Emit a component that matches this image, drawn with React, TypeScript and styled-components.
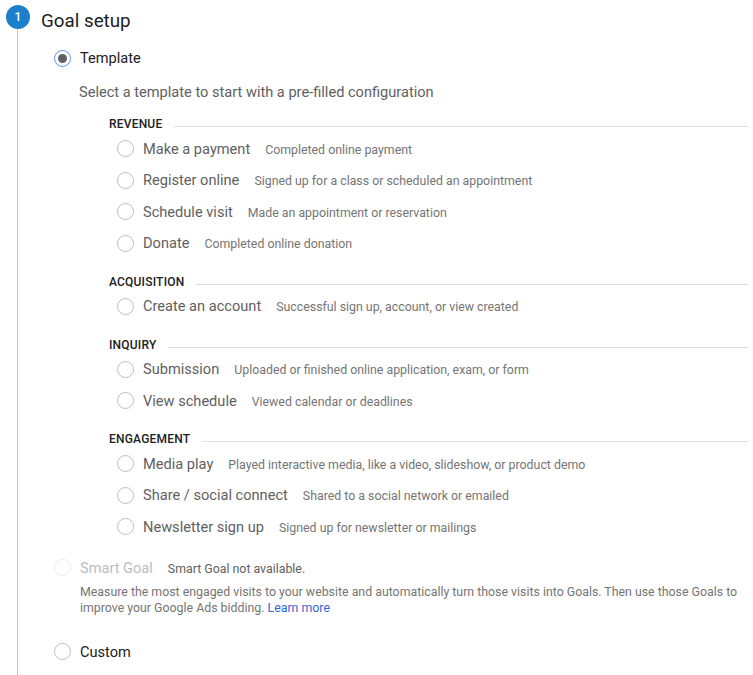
import { createGlobalStyle, styled } from "styled-components";

const GlobalStyle = createGlobalStyle`
  html, body {
    margin: 0;
    padding: 0;
    background: #fff;
  }
  body {
    font-family: Roboto, "Liberation Sans", Arial, sans-serif;
  }
`;

const groups = [
  {
    name: "Revenue",
    items: [
      ["Make a payment", "Completed online payment"],
      ["Register online", "Signed up for a class or scheduled an appointment"],
      ["Schedule visit", "Made an appointment or reservation"],
      ["Donate", "Completed online donation"],
    ],
  },
  {
    name: "Acquisition",
    items: [["Create an account", "Successful sign up, account, or view created"]],
  },
  {
    name: "Inquiry",
    items: [
      ["Submission", "Uploaded or finished online application, exam, or form"],
      ["View schedule", "Viewed calendar or deadlines"],
    ],
  },
  {
    name: "Engagement",
    items: [
      ["Media play", "Played interactive media, like a video, slideshow, or product demo"],
      ["Share / social connect", "Shared to a social network or emailed"],
      ["Newsletter sign up", "Signed up for newsletter or mailings"],
    ],
  },
];

const Page = styled.div`
  display: flex;
  width: 753px;
  height: 675px;
  overflow: hidden;
  box-sizing: border-box;
  padding: 5px 5px 0 6px;
`;

const Rail = styled.div`
  display: flex;
  flex-direction: column;
  align-items: center;
  width: 24px;
  flex: none;
`;

const StepBadge = styled.div`
  width: 24px;
  height: 24px;
  flex: none;
  border-radius: 50%;
  background: #1c7fcb;
  color: #fff;
  font-size: 12px;
  font-weight: 500;
  display: flex;
  align-items: center;
  justify-content: center;
`;

const RailLine = styled.div`
  width: 1px;
  flex: 1;
  margin-right: 1px;
  background: #c6c6c6;
`;

const Body = styled.div`
  flex: 1;
  min-width: 0;
  padding-left: 11px;
`;

const Title = styled.h2`
  margin: 0;
  height: 30px;
  line-height: 32px;
  font-size: 18.8px;
  font-weight: 400;
  color: #212121;
`;

const Options = styled.div`
  padding-left: 13px;
`;

const OptionRow = styled.label<{ $top: number }>`
  display: flex;
  align-items: center;
  height: 20px;
  margin-top: ${(p) => p.$top}px;
  gap: 9px;
`;

const Radio = styled.span<{ $state?: "checked" | "disabled" }>`
  width: 17px;
  height: 17px;
  flex: none;
  box-sizing: border-box;
  border-radius: 50%;
  background: #fff;
  display: flex;
  align-items: center;
  justify-content: center;
  border: 1px solid
    ${(p) =>
      p.$state === "checked" ? "#5b8fef" : p.$state === "disabled" ? "#ececec" : "#bdbdbd"};
  &::after {
    content: "";
    width: 9px;
    height: 9px;
    border-radius: 50%;
    background: ${(p) => (p.$state === "checked" ? "#616161" : "transparent")};
  }
`;

const OptionLabel = styled.span<{ $muted?: boolean }>`
  font-size: 14.6px;
  color: ${(p) => (p.$muted ? "#bdbdbd" : "#212121")};
`;

const Intro = styled.p`
  margin: 14px 0 0 25px;
  height: 20px;
  line-height: 20px;
  font-size: 14.6px;
  color: #616161;
`;

const Groups = styled.div`
  padding-left: 55px;
  margin-top: 13.2px;
`;

const Group = styled.section`
  margin-bottom: 13.5px;
`;

const GroupHeader = styled.div`
  display: flex;
  align-items: center;
  gap: 12px;
  height: 18px;
`;

const GroupName = styled.h3`
  margin: 0;
  font-size: 12px;
  font-weight: 500;
  letter-spacing: 0.2px;
  text-transform: uppercase;
  color: #212121;
`;

const GroupRule = styled.div`
  flex: 1;
  height: 1px;
  margin-top: 5px;
  background: #e0e0e0;
`;

const TemplateRow = styled.label`
  display: flex;
  align-items: center;
  height: 31.5px;
  padding-left: 8px;
`;

const TemplateLabel = styled.span`
  margin-left: 9px;
  font-size: 14.6px;
  color: #5f5f5f;
`;

const Hint = styled.span`
  margin-left: 15px;
  padding-top: 2px;
  font-size: 12.35px;
  color: #757575;
`;

const SmartHint = styled.span`
  margin-left: 6px;
  padding-top: 2px;
  font-size: 12.35px;
  color: #616161;
`;

const SmartText = styled.p`
  margin: 6px 0 0 26px;
  font-size: 12.35px;
  line-height: 16px;
  color: #757575;
`;

const LearnMore = styled.a`
  color: #3367d6;
  text-decoration: none;
`;

export default function App() {
  return (
    <Page>
      <GlobalStyle />
      <Rail>
        <StepBadge>1</StepBadge>
        <RailLine />
      </Rail>
      <Body>
        <Title>Goal setup</Title>
        <Options>
          <OptionRow $top={13}>
            <Radio $state="checked" />
            <OptionLabel>Template</OptionLabel>
          </OptionRow>
          <Intro>Select a template to start with a pre-filled configuration</Intro>
          <Groups>
            {groups.map((group) => (
              <Group key={group.name}>
                <GroupHeader>
                  <GroupName>{group.name}</GroupName>
                  <GroupRule />
                </GroupHeader>
                {group.items.map(([label, hint]) => (
                  <TemplateRow key={label}>
                    <Radio />
                    <TemplateLabel>{label}</TemplateLabel>
                    <Hint>{hint}</Hint>
                  </TemplateRow>
                ))}
              </Group>
            ))}
          </Groups>
          <OptionRow $top={15.3}>
            <Radio $state="disabled" />
            <OptionLabel $muted>Smart Goal</OptionLabel>
            <SmartHint>Smart Goal not available.</SmartHint>
          </OptionRow>
          <SmartText>
            Measure the most engaged visits to your website and automatically turn those visits into Goals. Then use those Goals to improve your Google Ads bidding. <LearnMore href="#">Learn more</LearnMore>
          </SmartText>
          <OptionRow $top={26}>
            <Radio />
            <OptionLabel>Custom</OptionLabel>
          </OptionRow>
        </Options>
      </Body>
    </Page>
  );
}
